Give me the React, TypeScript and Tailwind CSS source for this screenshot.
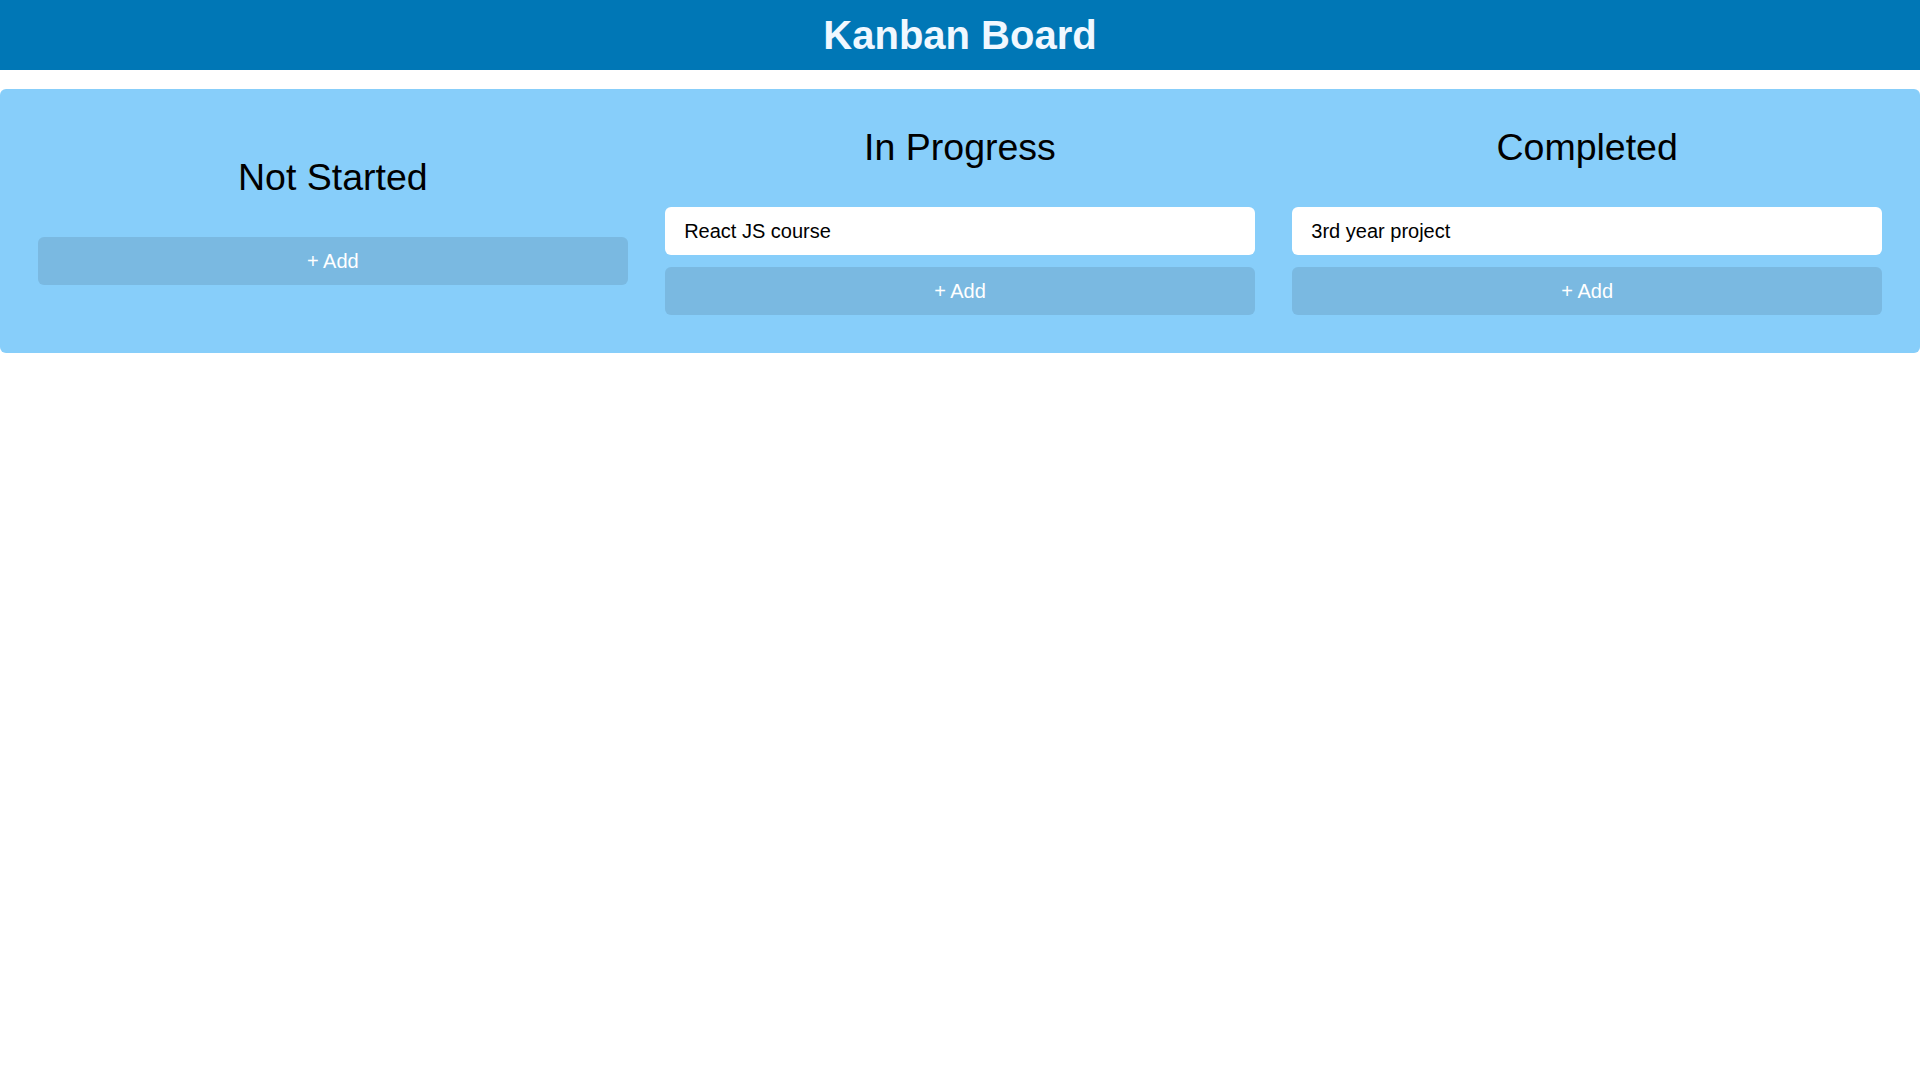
const columns = [
  { title: "Not Started", tasks: [] as string[] },
  { title: "In Progress", tasks: ["React JS course"] },
  { title: "Completed", tasks: ["3rd year project"] },
];

function Column({ title, tasks }: { title: string; tasks: string[] }) {
  return (
    <div className="flex flex-col">
      <h2 className="text-center text-[37.5px] leading-[40px] text-black mb-[40px]">{title}</h2>
      <div className="flex flex-col gap-[12px]">
        {tasks.map((t) => (
          <div key={t} className="bg-white rounded-[6px] h-[48px] flex items-center px-[19px] text-[20px] text-black">
            {t}
          </div>
        ))}
        <button className="h-[48px] rounded-[6px] bg-[#7ab9e1] text-white text-[20px]">+ Add</button>
      </div>
    </div>
  );
}

export default function App() {
  return (
    <div className="min-h-screen bg-white font-['Liberation_Sans',Arial,sans-serif]">
      <header className="h-[70px] bg-[#0077b6] flex items-center justify-center">
        <h1 className="text-[40px] font-bold text-[#f0f8ff] leading-none">Kanban Board</h1>
      </header>
      <div className="mt-[19px] bg-[#87cefa] rounded-[6px] grid grid-cols-3 gap-[37.5px] px-[38px] py-[38px] items-center">
        {columns.map((c) => (
          <Column key={c.title} title={c.title} tasks={c.tasks} />
        ))}
      </div>
    </div>
  );
}
